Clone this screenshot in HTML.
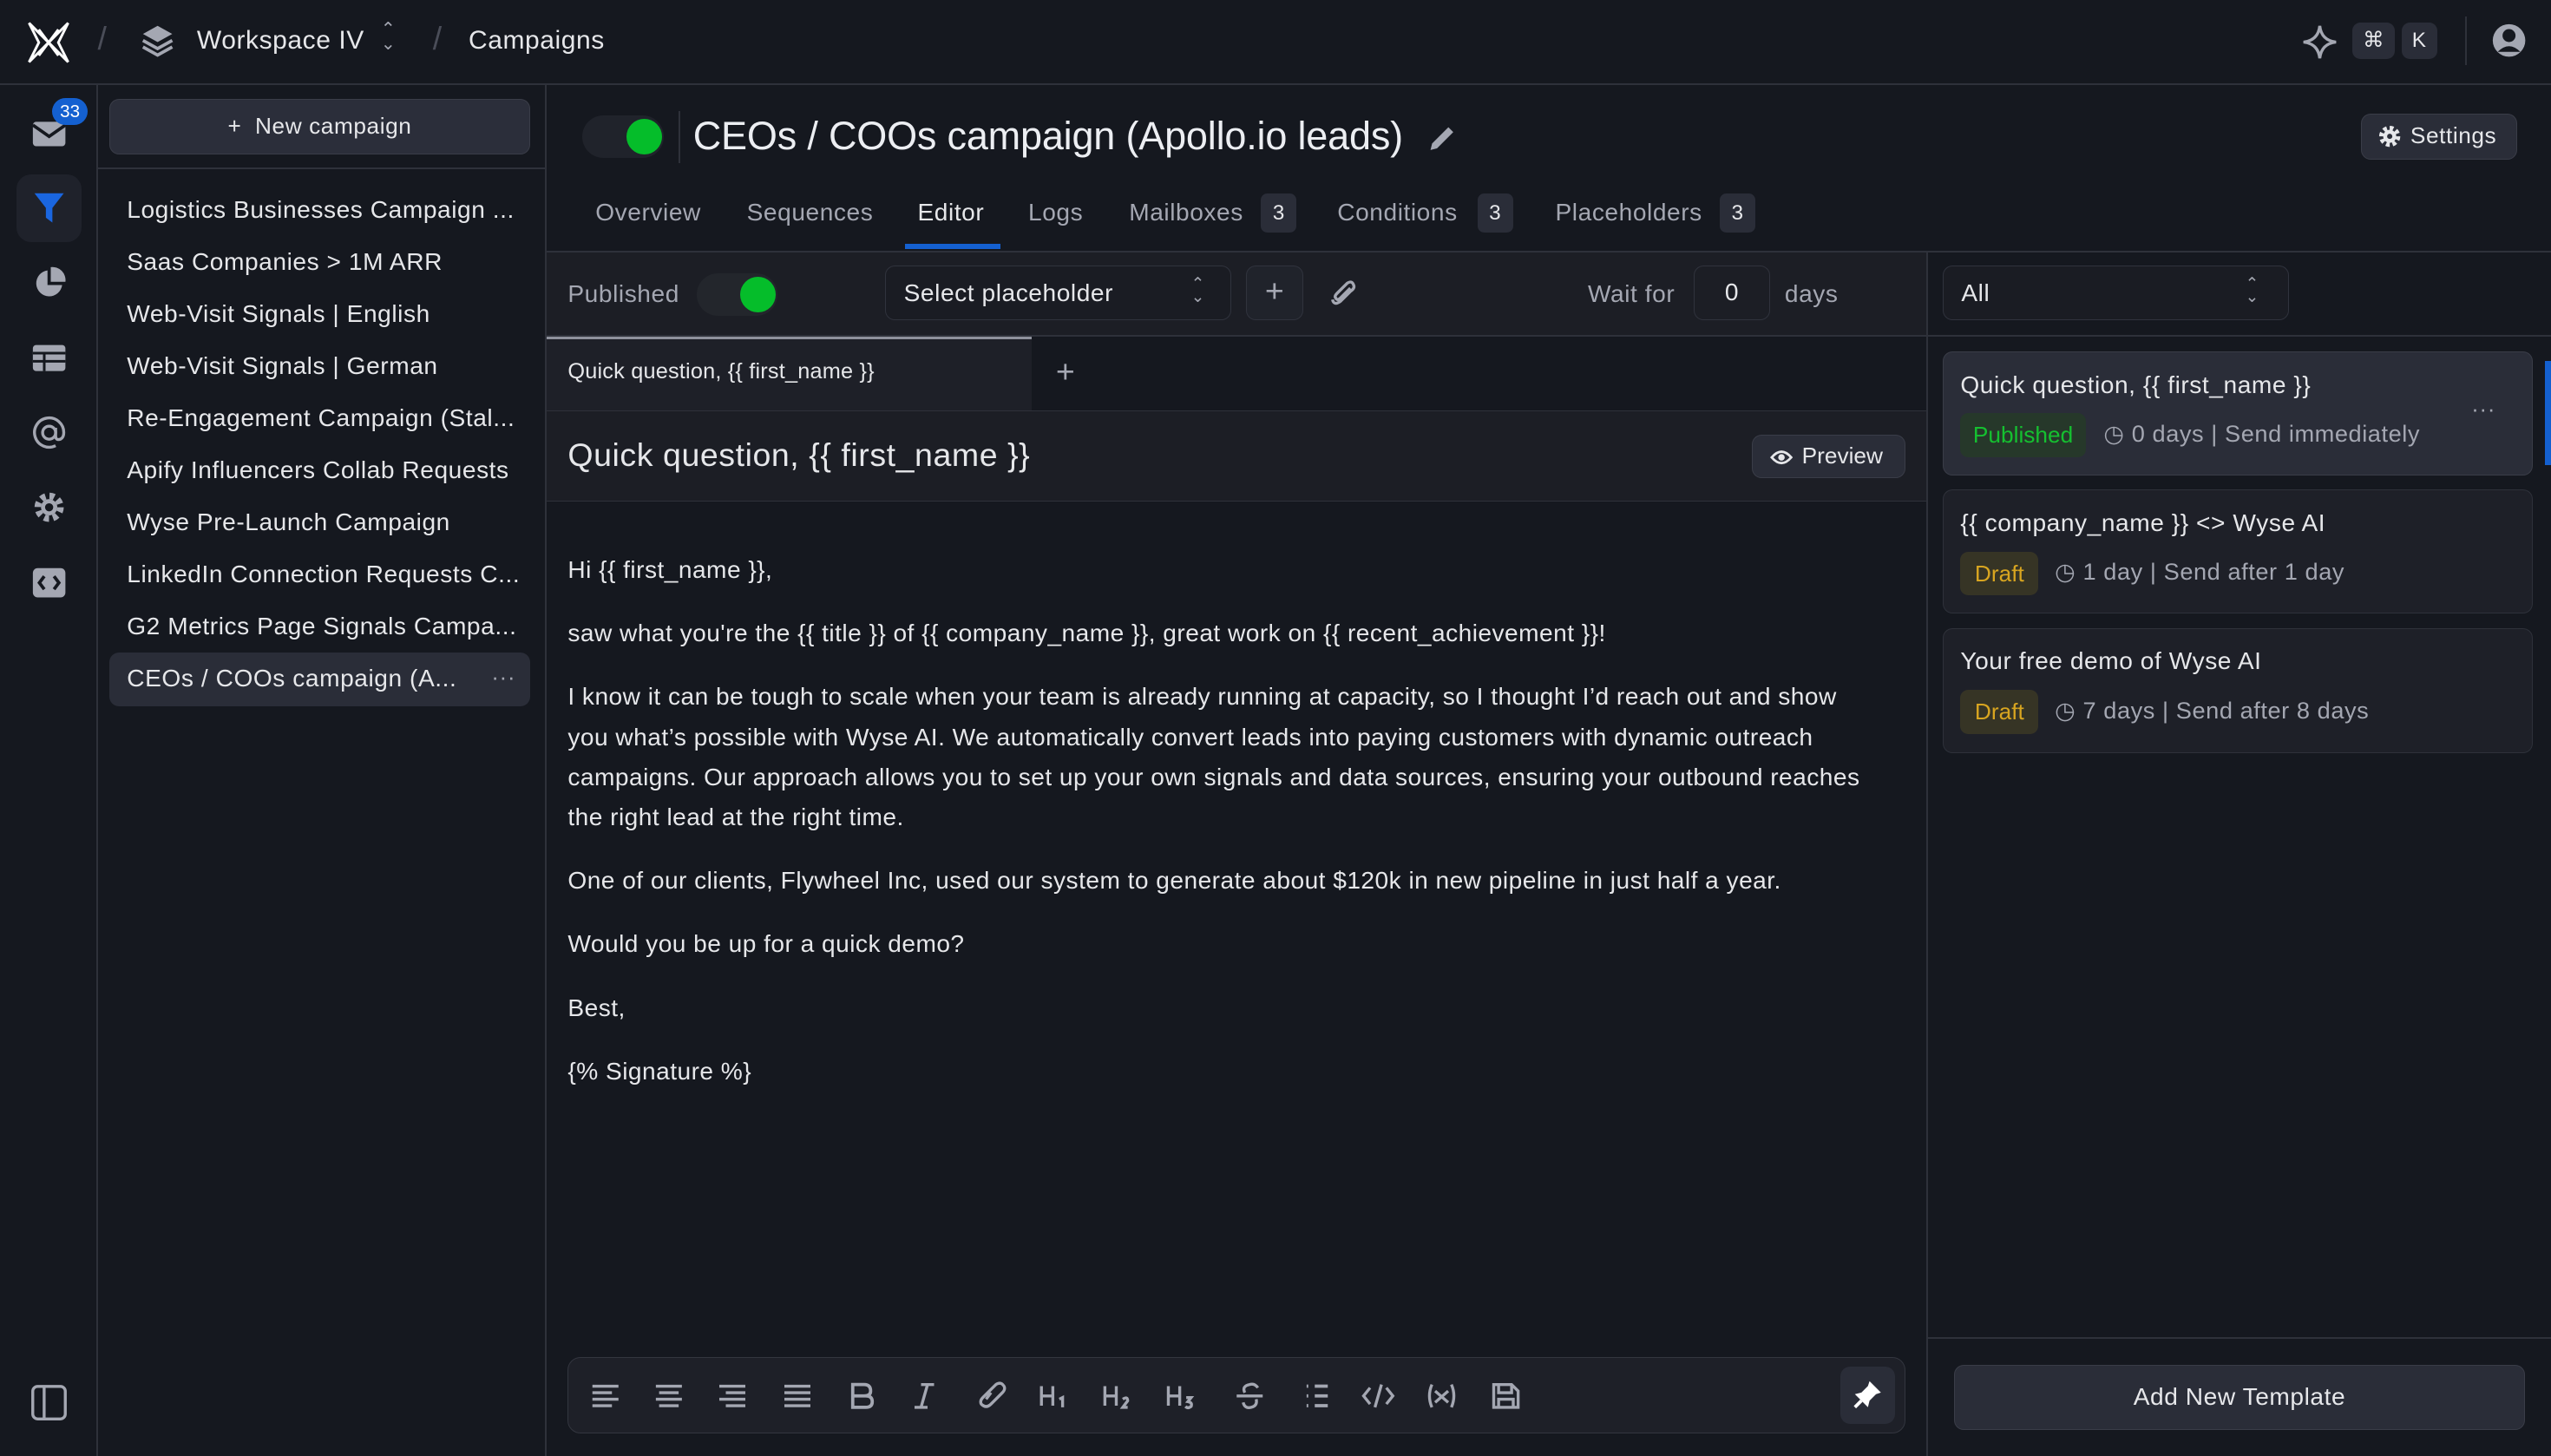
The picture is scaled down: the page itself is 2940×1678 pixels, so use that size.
<!DOCTYPE html>
<html><head><meta charset="utf-8"><style>
html{zoom:1.875}
*{box-sizing:border-box;margin:0;padding:0}
body{width:1568px;height:895px;background:#15181f;color:#e6e7ea;font-family:"Liberation Sans",sans-serif;font-size:15px;position:relative;overflow:hidden;letter-spacing:.3px}
.a{position:absolute}
.bd{border:1px solid #30333d}
.btn{background:#2a2d38;border:1px solid #3a3d48;border-radius:6px}
.muted{color:#a4a7b2}
.ic{stroke:#a4a7b2;fill:none;stroke-width:1.8}
</style></head><body>
<!-- top bar -->
<div class="a" style="left:0;top:51px;width:1568px;height:1px;background:#2e313a"></div>
<svg class="a" style="left:14px;top:10px" width="32" height="32" viewBox="0 0 32 32"><path d="M4 4 L16 16 L28 4 L22 16 L28 28 L16 16 L4 28 L10 16Z" fill="none" stroke="#fff" stroke-width="1.6"/><path d="M10 8 L16 16 L22 8 M10 24 L16 16 L22 24" stroke="#fff" stroke-width="1.6" fill="none"/></svg>
<div class="a muted" style="left:60px;top:12px;font-size:20px;color:#4a4d58">/</div>
<svg class="a" style="left:86px;top:14px" width="22" height="22" viewBox="0 0 22 22"><path d="M11 2 L20 7 L11 12 L2 7Z" fill="#a4a7b2"/><path d="M2 11 L11 16 L20 11 M2 15 L11 20 L20 15" stroke="#a4a7b2" stroke-width="2" fill="none"/></svg>
<div class="a" style="left:121px;top:16px;font-size:16px">Workspace IV</div>
<div class="a muted" style="left:234px;top:14px;font-size:11px;line-height:9px">⌃<br>⌄</div>
<div class="a" style="left:266px;top:12px;font-size:20px;color:#4a4d58">/</div>
<div class="a" style="left:288px;top:16px;font-size:16px">Campaigns</div>
<svg class="a" style="left:1414px;top:14px" width="24" height="24" viewBox="0 0 24 24"><path d="M12 2 Q13 11 22 12 Q13 13 12 22 Q11 13 2 12 Q11 11 12 2Z" class="ic"/></svg>
<div class="a" style="left:1446px;top:14px;width:26px;height:22px;background:#2a2d38;border-radius:5px;text-align:center;line-height:22px;font-size:13px">⌘</div>
<div class="a" style="left:1476px;top:14px;width:22px;height:22px;background:#2a2d38;border-radius:5px;text-align:center;line-height:22px;font-size:13px">K</div>
<div class="a" style="left:1515px;top:10px;width:1px;height:30px;background:#2e313a"></div>
<svg class="a" style="left:1531px;top:14px" width="22" height="22" viewBox="0 0 22 22"><circle cx="11" cy="11" r="10" fill="#a4a7b2"/><circle cx="11" cy="8" r="4" fill="#15181f"/><path d="M4 18 Q11 11 18 18" fill="#15181f"/></svg>

<!-- left rail -->
<div class="a" style="left:59px;top:52px;width:1px;height:843px;background:#2e313a"></div>
<svg class="a" style="left:19px;top:70px" width="22" height="22" viewBox="0 0 22 22"><rect x="1" y="5" width="20" height="15" rx="2" fill="#a4a7b2"/><path d="M1 7 L11 14 L21 7" stroke="#15181f" stroke-width="2" fill="none"/></svg>
<div class="a" style="left:32px;top:60px;width:22px;height:17px;background:#1460d0;border-radius:9px;font-size:11px;text-align:center;line-height:17px;color:#fff;letter-spacing:0">33</div>
<div class="a" style="left:10px;top:107px;width:40px;height:42px;background:#1f222b;border-radius:9px"></div>
<svg class="a" style="left:19px;top:117px" width="22" height="22" viewBox="0 0 22 22"><path d="M2 2 H20 L13 11 V20 L9 17 V11Z" fill="#1a66e0"/></svg>
<svg class="a" style="left:19px;top:163px" width="22" height="22" viewBox="0 0 22 22"><path d="M10 3 A8 8 0 1 0 19 12 H10Z" fill="#a4a7b2"/><path d="M12 1 A8 8 0 0 1 21 10 H12Z" fill="#a4a7b2"/></svg>
<svg class="a" style="left:19px;top:209px" width="22" height="22" viewBox="0 0 22 22"><rect x="1" y="3" width="20" height="16" rx="2" fill="#a4a7b2"/><path d="M1 8 H21 M1 13 H21 M8 8 V19" stroke="#15181f" stroke-width="1.6"/></svg>
<svg class="a" style="left:19px;top:255px" width="22" height="22" viewBox="0 0 22 22"><circle cx="11" cy="11" r="4" class="ic"/><path d="M15 8 V13 Q15 16 18 15 Q20 14 20 11 A9 9 0 1 0 15 19" class="ic"/></svg>
<svg class="a" style="left:19px;top:301px" width="22" height="22" viewBox="0 0 22 22"><circle cx="11" cy="11" r="7" fill="none" stroke="#a4a7b2" stroke-width="4" stroke-dasharray="3 2.5"/><circle cx="11" cy="11" r="5" fill="#a4a7b2"/><circle cx="11" cy="11" r="2.5" fill="#15181f"/></svg>
<svg class="a" style="left:19px;top:347px" width="22" height="22" viewBox="0 0 22 22"><rect x="1" y="2" width="20" height="18" rx="3" fill="#a4a7b2"/><path d="M8 7 L5 11 L8 15 M14 7 L17 11 L14 15" stroke="#15181f" stroke-width="2" fill="none"/></svg>
<svg class="a" style="left:18px;top:850px" width="24" height="24" viewBox="0 0 24 24"><rect x="2" y="2" width="20" height="20" rx="3" class="ic"/><path d="M9 2 V22" class="ic"/></svg>

<!-- campaign list -->
<div class="a" style="left:335px;top:52px;width:1px;height:843px;background:#2e313a"></div>
<div class="a btn" style="left:67px;top:61px;width:259px;height:34px;text-align:center;line-height:32px;font-size:14px;background:#2b2e3a">+&nbsp; New campaign</div>
<div class="a" style="left:60px;top:103px;width:275px;height:1px;background:#2e313a"></div>
<div class="a" style="left:67px;top:401px;width:259px;height:33px;background:#2a2d38;border-radius:6px"></div>
<div class="a" style="left:78px;top:113px;line-height:32px;font-size:15px;white-space:nowrap">
Logistics Businesses Campaign ...<br>Saas Companies &gt; 1M ARR<br>Web-Visit Signals | English<br>Web-Visit Signals | German<br>Re-Engagement Campaign (Stal...<br>Apify Influencers Collab Requests<br>Wyse Pre-Launch Campaign<br>LinkedIn Connection Requests C...<br>G2 Metrics Page Signals Campa...<br>CEOs / COOs campaign (A...</div>
<div class="a muted" style="left:302px;top:408px;font-size:14px">···</div>

<!-- header -->
<div class="a" style="left:358px;top:71px;width:50px;height:26px;background:#20232b;border-radius:13px"></div>
<div class="a" style="left:385px;top:73px;width:22px;height:22px;background:#05bd2a;border-radius:50%"></div>
<div class="a" style="left:417px;top:68px;width:1px;height:32px;background:#2e313a"></div>
<div class="a" style="left:426px;top:70px;font-size:24px;color:#eceef2;letter-spacing:-0.1px">CEOs / COOs campaign (Apollo.io leads)</div>
<svg class="a" style="left:876px;top:75px" width="20" height="20" viewBox="0 0 20 20"><path d="M3 17 L4 13 L14 3 L17 6 L7 16Z" fill="#a4a7b2"/></svg>
<div class="a btn" style="left:1451px;top:70px;width:96px;height:28px;font-size:14px;line-height:26px;padding-left:30px">Settings</div>
<svg class="a" style="left:1462px;top:77px" width="14" height="14" viewBox="0 0 14 14"><circle cx="7" cy="7" r="5" fill="none" stroke="#e6e7ea" stroke-width="3" stroke-dasharray="2.2 1.7"/><circle cx="7" cy="7" r="4" fill="#e6e7ea"/><circle cx="7" cy="7" r="1.6" fill="#2a2d38"/></svg>
<div class="a muted" style="left:366px;top:122px;font-size:15px">Overview</div>
<div class="a muted" style="left:459px;top:122px;font-size:15px">Sequences</div>
<div class="a" style="left:564px;top:122px;font-size:15px">Editor</div>
<div class="a" style="left:556px;top:150px;width:59px;height:3px;background:#1460d0"></div>
<div class="a muted" style="left:632px;top:122px;font-size:15px">Logs</div>
<div class="a muted" style="left:694px;top:122px;font-size:15px">Mailboxes</div>
<div class="a" style="left:775px;top:119px;width:22px;height:24px;background:#2a2d38;border-radius:4px;text-align:center;line-height:24px;font-size:13px">3</div>
<div class="a muted" style="left:822px;top:122px;font-size:15px">Conditions</div>
<div class="a" style="left:908px;top:119px;width:22px;height:24px;background:#2a2d38;border-radius:4px;text-align:center;line-height:24px;font-size:13px">3</div>
<div class="a muted" style="left:956px;top:122px;font-size:15px">Placeholders</div>
<div class="a" style="left:1057px;top:119px;width:22px;height:24px;background:#2a2d38;border-radius:4px;text-align:center;line-height:24px;font-size:13px">3</div>
<div class="a" style="left:336px;top:154px;width:1232px;height:1px;background:#2e313a"></div>

<!-- editor -->
<div class="a" style="left:336px;top:155px;width:848px;height:51px;background:#1c1e25"></div>
<div class="a" style="left:1184px;top:155px;width:1px;height:740px;background:#2e313a"></div>
<div class="a muted" style="left:349px;top:172px;font-size:15px">Published</div>
<div class="a" style="left:428px;top:168px;width:50px;height:26px;background:#23262c;border-radius:13px"></div>
<div class="a" style="left:455px;top:170px;width:22px;height:22px;background:#05bd2a;border-radius:50%"></div>
<div class="a bd" style="left:544px;top:163px;width:213px;height:34px;border-radius:6px;background:#1a1c23;padding:8px 11px;font-size:15px">Select placeholder</div>
<div class="a muted" style="left:732px;top:170px;font-size:10px;line-height:8px">⌃<br>⌄</div>
<div class="a bd" style="left:766px;top:163px;width:35px;height:34px;border-radius:6px;background:#20232b;text-align:center;line-height:30px;font-size:20px;color:#a4a7b2">+</div>
<svg class="a" style="left:816px;top:170px" width="20" height="20" viewBox="0 0 20 20"><path d="M14 7 L8 13 Q6 15 5 13 Q4 12 6 10 L12 4 Q15 2 16 5 Q17 7 14 9 L8 15 Q4 18 3 14" class="ic" stroke-width="1.5"/></svg>
<div class="a muted" style="left:976px;top:172px;font-size:15px">Wait for</div>
<div class="a bd" style="left:1041px;top:163px;width:47px;height:34px;border-radius:6px;text-align:center;line-height:32px;font-size:15px">0</div>
<div class="a muted" style="left:1097px;top:172px;font-size:15px">days</div>
<div class="a" style="left:336px;top:206px;width:848px;height:1px;background:#2e313a"></div>
<div class="a" style="left:336px;top:207px;width:298px;height:45px;background:#1e2028;border-top:2px solid #8e919c;font-size:13.5px;padding:12px 13px;letter-spacing:.1px">Quick question, {{ first_name }}</div>
<div class="a muted" style="left:649px;top:217px;font-size:20px">+</div>
<div class="a" style="left:336px;top:252px;width:848px;height:56px;background:#1c1e25;border-top:1px solid #2e313a;border-bottom:1px solid #2e313a"></div>
<div class="a" style="left:349px;top:268px;font-size:20px">Quick question, {{ first_name }}</div>
<div class="a btn" style="left:1077px;top:267px;width:94px;height:27px;font-size:14px;line-height:25px;padding-left:30px;letter-spacing:0">Preview</div>
<svg class="a" style="left:1088px;top:274px" width="14" height="14" viewBox="0 0 14 14"><path d="M1 7 Q7 0 13 7 Q7 14 1 7Z" fill="none" stroke="#e6e7ea" stroke-width="1.5"/><circle cx="7" cy="7" r="2" fill="#e6e7ea"/></svg>
<div class="a" style="left:349px;top:338px;width:822px;font-size:15px;line-height:24.6px;color:#e6e7ea;letter-spacing:.25px">
<p style="margin-bottom:14.5px">Hi {{ first_name }},</p>
<p style="margin-bottom:14.5px">saw what you're the {{ title }} of {{ company_name }}, great work on {{ recent_achievement }}!</p>
<p style="margin-bottom:14.5px">I know it can be tough to scale when your team is already running at capacity, so I thought I’d reach out and show<br>you what’s possible with Wyse AI. We automatically convert leads into paying customers with dynamic outreach<br>campaigns. Our approach allows you to set up your own signals and data sources, ensuring your outbound reaches<br>the right lead at the right time.</p>
<p style="margin-bottom:14.5px">One of our clients, Flywheel Inc, used our system to generate about $120k in new pipeline in just half a year.</p>
<p style="margin-bottom:14.5px">Would you be up for a quick demo?</p>
<p style="margin-bottom:14.5px">Best,</p>
<p>{% Signature %}</p></div>

<!-- bottom toolbar -->
<div class="a bd" style="left:349px;top:834px;width:822px;height:47px;border-radius:8px;background:#1e2028;border-color:#33363f"></div>
<svg class="a" style="left:362px;top:848px" width="580" height="20" viewBox="0 0 580 20" fill="none" stroke="#a4a7b2" stroke-width="1.8">
<path d="M2 4H18M2 8H14M2 12H18M2 16H14"/>
<path d="M41 4H57M43 8H55M41 12H57M43 16H55"/>
<path d="M80 4H96M84 8H96M80 12H96M84 16H96"/>
<path d="M120 4H136M120 8H136M120 12H136M120 16H136"/>
<path d="M162 3H169Q173 3 173 7Q173 10 169 10H162ZM162 10H170Q174 10 174 13.5Q174 17 170 17H162Z" stroke-width="2"/>
<path d="M204 3H212M200 17H208M208 3L204 17"/>
<path d="M242 11L250 3Q253 1 255 4Q256 6 254 8L247 15Q244 18 241 15Q240 13 242 11M247 8L244 12"/>
<path d="M278 4V16M278 10H285M285 4V16M289 12L291 11V17"/>
<path d="M317 4V16M317 10H324M324 4V16M328 12Q331 10 331 13L328 17H331"/>
<path d="M356 4V16M356 10H363M363 4V16M367 11H370L368 13.5Q371 14 370 16.5Q368 18 366.5 16.5"/>
<path d="M398 10H414M411 5Q409 2 406 3Q401 4 403 8M402 14Q403 18 407 17Q411 16 410 12"/>
<path d="M441 4H442M441 10H442M441 16H442M446 4H454M446 10H454M446 16H454" stroke-width="2"/>
<path d="M480 5L476 10L480 15M490 5L494 10L490 15M487 3L483 17"/>
<path d="M518 3Q515 10 518 17M530 3Q533 10 530 17M520 7L528 14M528 7L520 14"/>
<path d="M556 3H567L571 7V17H556ZM559 3V8H567V3M559 17V12H568V17"/>
</svg>
<div class="a" style="left:1131px;top:840px;width:34px;height:35px;background:#2a2d38;border-radius:6px"></div>
<svg class="a" style="left:1138px;top:847px" width="20" height="20" viewBox="0 0 20 20"><path d="M11 2 L18 9 L15 10 L11 14 L10 18 L2 10 L6 9 L10 5Z" fill="#fff"/><path d="M6 14 L2 18" stroke="#fff" stroke-width="2"/></svg>

<!-- right panel -->
<div class="a bd" style="left:1194px;top:163px;width:213px;height:34px;border-radius:6px;background:#1a1c23;padding:8px 11px;font-size:15px">All</div>
<div class="a muted" style="left:1380px;top:170px;font-size:10px;line-height:8px">⌃<br>⌄</div>
<div class="a" style="left:1185px;top:206px;width:383px;height:1px;background:#2e313a"></div>
<div class="a" style="left:1194px;top:216px;width:363px;height:76px;background:#2a2d38;border:1px solid #3a3d48;border-radius:6px"></div>
<div class="a" style="left:1564px;top:222px;width:4px;height:64px;background:#1460d0"></div>
<div class="a" style="left:1194px;top:301px;width:363px;height:76px;background:#1e2028;border:1px solid #2e313a;border-radius:6px"></div>
<div class="a" style="left:1194px;top:386px;width:363px;height:77px;background:#1e2028;border:1px solid #2e313a;border-radius:6px"></div>
<div class="a" style="left:1205px;top:228px;font-size:15px">Quick question, {{ first_name }}</div>
<div class="a" style="left:1205px;top:254px;width:77px;height:27px;background:#26382a;border-radius:5px;color:#15c030;font-size:14px;text-align:center;line-height:27px;letter-spacing:0">Published</div>
<div class="a muted" style="left:1293px;top:258px;font-size:14.5px">◷ 0 days | Send immediately</div>
<div class="a muted" style="left:1519px;top:243px;font-size:14px">···</div>
<div class="a" style="left:1205px;top:313px;font-size:15px">{{ company_name }} &lt;&gt; Wyse AI</div>
<div class="a" style="left:1205px;top:339px;width:48px;height:27px;background:#363425;border-radius:5px;color:#d8a520;font-size:14px;text-align:center;line-height:27px;letter-spacing:0">Draft</div>
<div class="a muted" style="left:1263px;top:343px;font-size:14.5px">◷ 1 day | Send after 1 day</div>
<div class="a" style="left:1205px;top:398px;font-size:15px">Your free demo of Wyse AI</div>
<div class="a" style="left:1205px;top:424px;width:48px;height:27px;background:#363425;border-radius:5px;color:#d8a520;font-size:14px;text-align:center;line-height:27px;letter-spacing:0">Draft</div>
<div class="a muted" style="left:1263px;top:428px;font-size:14.5px">◷ 7 days | Send after 8 days</div>
<div class="a" style="left:1185px;top:822px;width:383px;height:1px;background:#2e313a"></div>
<div class="a btn" style="left:1201px;top:839px;width:351px;height:40px;text-align:center;line-height:38px;font-size:15px">Add New Template</div>
</body></html>
